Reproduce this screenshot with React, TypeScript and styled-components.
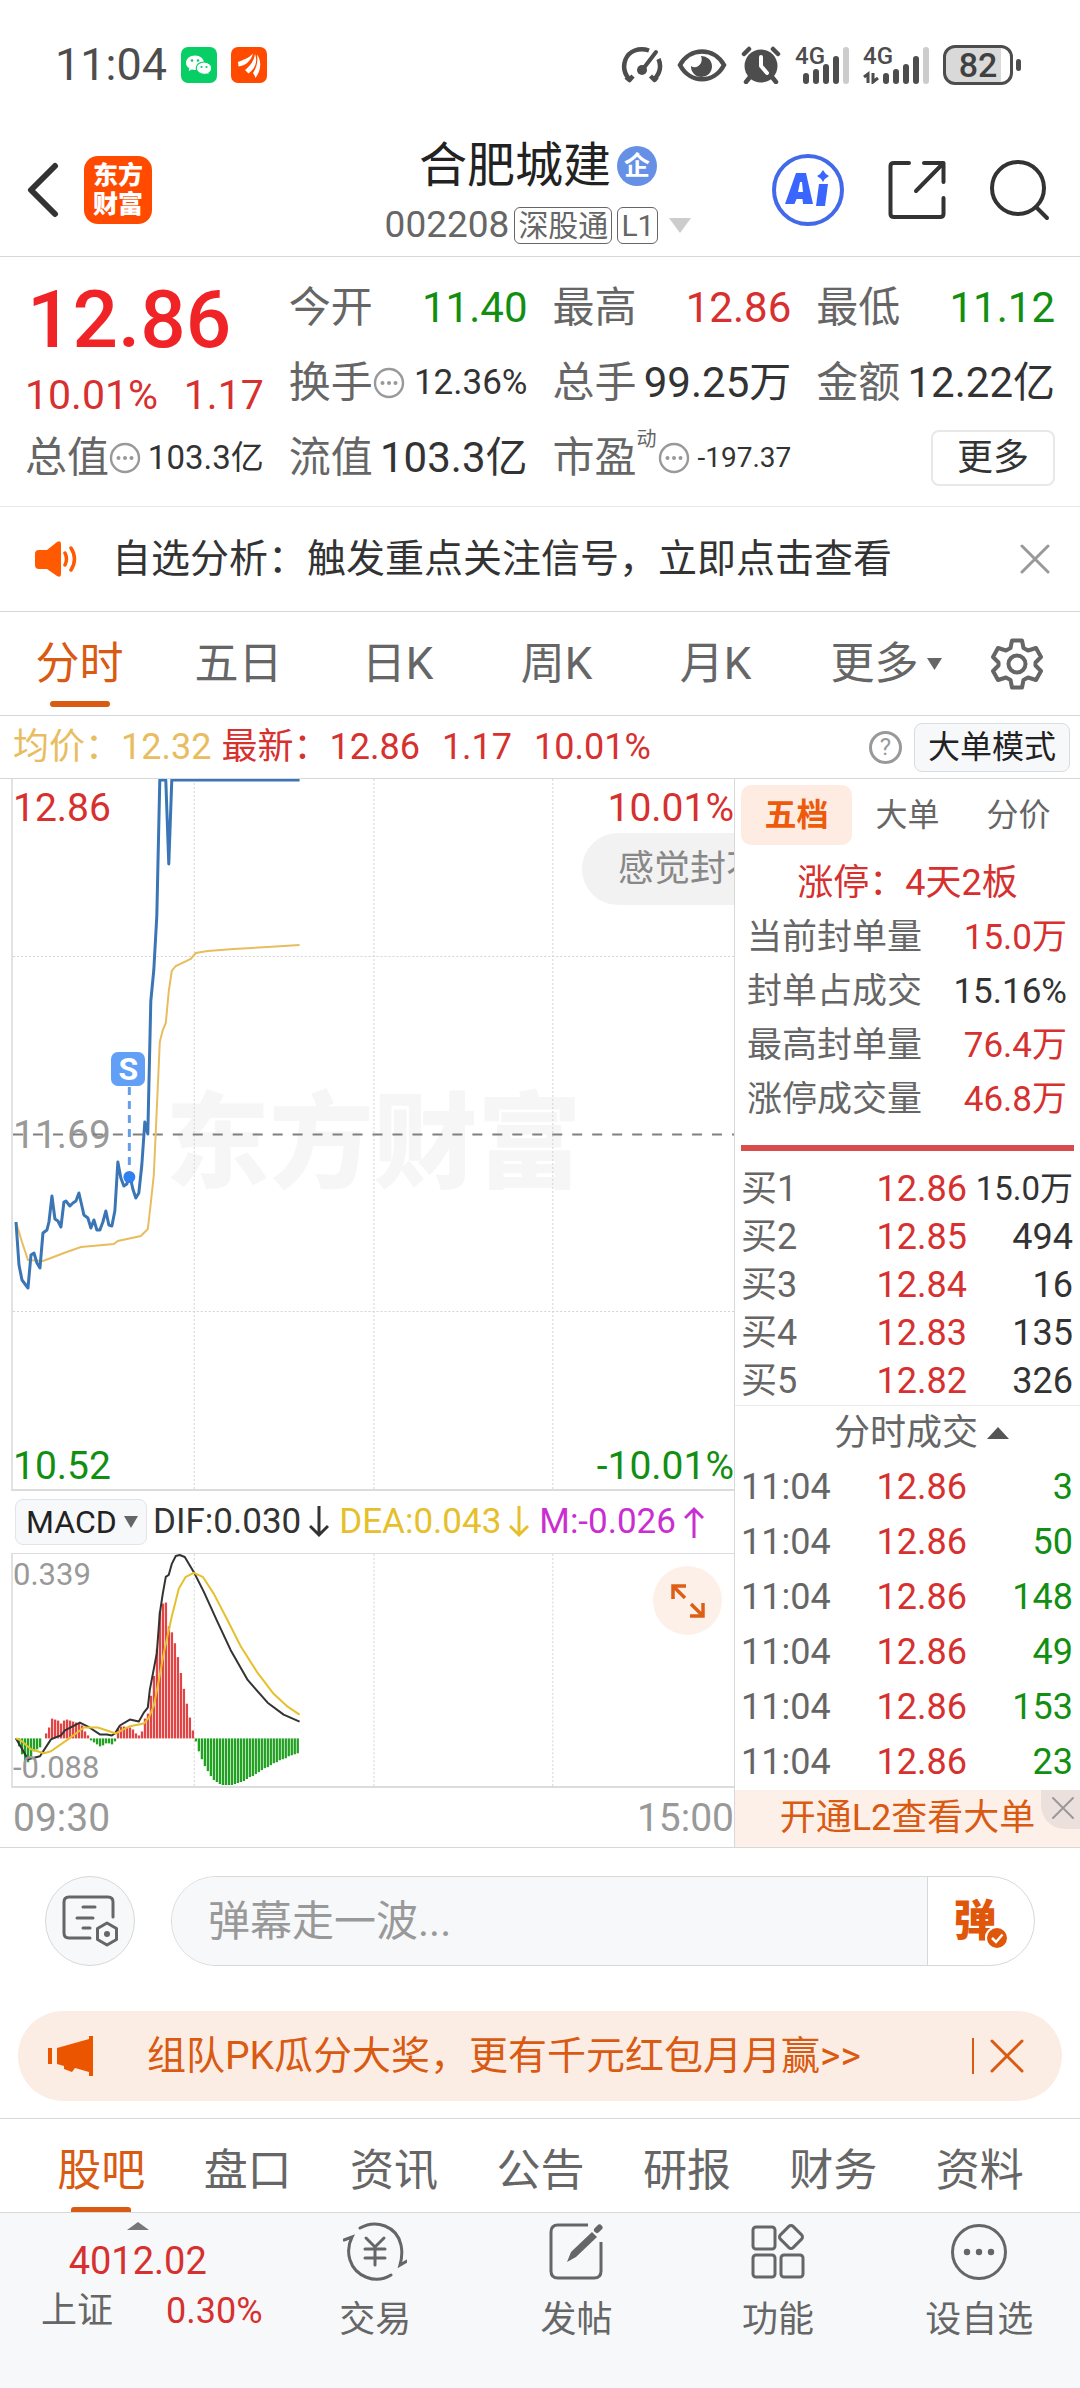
import React from "react";
import styled, { createGlobalStyle } from "styled-components";

const color = {
  red: "#d6302f",
  green: "#128f12",
  ink: "#333333",
  gray: "#666666",
  mute: "#999999",
  orange: "#d95a12",
  blue: "#3a75b5",
  gold: "#e8bd60",
  yellow: "#e6c02c",
  purple: "#c92fd0",
  line: "#d8d8d8",
  soft: "#f7f8fa",
  peach: "#fdf0e9",
};

const GlobalStyle = createGlobalStyle`
  *, *::before, *::after { box-sizing: border-box; }
  body { margin: 0; background: #fff; }
  body, button, input, select {
    font-family: Roboto, "Noto Sans CJK SC", sans-serif;
    color: ${color.ink};
  }
  button, select { border: 0; background: none; padding: 0; margin: 0; cursor: pointer; }
  svg { display: block; flex: none; }
  table { border-collapse: collapse; }
  h1, p, dl, dd, dt { margin: 0; font-weight: 400; }
`;

const Page = styled.div`
  display: flex;
  flex-direction: column;
  min-height: 100vh;
`;

/* ---------- status bar ---------- */

const StatusBar = styled.div`
  display: flex;
  justify-content: space-between;
  align-items: center;
  height: 130px;
  padding: 0 67px 0 55px;
`;
const StatusGroup = styled.div<{ $gap: number }>`
  display: flex;
  align-items: center;
  gap: ${(p) => p.$gap}px;
`;
const Clock = styled.span`
  font-size: 45px;
  line-height: 50px;
  color: #4d4d4d;
`;
const Signal = styled.span`
  position: relative;
  display: block;
`;
const SignalTag = styled.span`
  position: absolute;
  left: 0;
  top: -2px;
  font-size: 24px;
  line-height: 24px;
  font-weight: 500;
  color: #4d4d4d;
`;
const Battery = styled.span`
  position: relative;
  display: flex;
  align-items: center;
  justify-content: center;
  width: 70px;
  height: 40px;
  border: 3px solid #4d4d4d;
  border-radius: 12px;
  background: linear-gradient(90deg, #d9d9d9 86%, #fff 86%);
  font-size: 34px;
  line-height: 34px;
  font-weight: 500;
  color: #404040;
  &::after {
    content: "";
    position: absolute;
    right: -11px;
    top: 11px;
    width: 5px;
    height: 12px;
    border-radius: 3px;
    background: #4d4d4d;
  }
`;

/* ---------- header ---------- */

const Header = styled.header`
  display: grid;
  grid-template-columns: 1fr auto 1fr;
  align-items: center;
  height: 127px;
  padding: 0 30px 2px 26px;
  border-bottom: 1px solid ${color.line};
`;
const HeaderSide = styled.div<{ $end?: boolean }>`
  display: flex;
  align-items: center;
  gap: ${(p) => (p.$end ? 44 : 24)}px;
  justify-content: ${(p) => (p.$end ? "flex-end" : "flex-start")};
  padding-bottom: 4px;
`;
const Logo = styled.span`
  display: grid;
  place-items: center;
  width: 68px;
  height: 68px;
  border-radius: 14px;
  background: #ff4a00;
  color: #fff;
  font-size: 25px;
  line-height: 29px;
  font-weight: 900;
`;
const TitleBlock = styled.div`
  display: flex;
  flex-direction: column;
  align-items: center;
  padding-top: 6px;
`;
const TitleRow = styled.div`
  display: flex;
  align-items: center;
  gap: 6px;
  height: 60px;
`;
const StockName = styled.h1`
  font-size: 48px;
  line-height: 60px;
  color: #222;
`;
const CorpBadge = styled.span`
  width: 40px;
  height: 40px;
  border-radius: 50%;
  background: #6690e6;
  color: #fff;
  font-size: 26px;
  line-height: 40px;
  font-weight: 700;
  text-align: center;
`;
const CodeRow = styled.div`
  display: flex;
  align-items: center;
  gap: 5px;
  height: 58px;
  color: ${color.gray};
`;
const Code = styled.span`
  font-size: 37px;
  line-height: 44px;
`;
const CodeTag = styled.span`
  padding: 0 3px;
  border: 1px solid ${color.gray};
  border-radius: 6px;
  font-size: 30px;
  line-height: 35px;
`;
const CodeArrow = styled.span`
  padding-left: 6px;
`;

/* ---------- quote ---------- */

const Quote = styled.section`
  display: grid;
  grid-template-columns: repeat(4, minmax(0, 1fr));
  grid-template-rows: repeat(3, 75px);
  column-gap: 25px;
  padding: 13px 25px 11px;
  border-bottom: 1px solid #e8e8e8;
`;
const PriceBlock = styled.div`
  grid-row: span 2;
`;
const LastPrice = styled.div`
  padding-left: 2px;
  font-size: 80px;
  line-height: 100px;
  font-weight: 500;
  color: #f02426;
`;
const ChangeRow = styled.div`
  display: flex;
  justify-content: space-between;
  font-size: 41px;
  line-height: 50px;
  color: ${color.red};
`;
const Stat = styled.dl`
  display: flex;
  align-items: center;
  justify-content: space-between;
  white-space: nowrap;
`;
const StatLabel = styled.dt`
  display: flex;
  align-items: center;
  font-size: 42px;
  line-height: 50px;
  color: ${color.gray};
`;
const StatNote = styled.span`
  align-self: flex-start;
  margin: -4px 1px 0 0;
  font-size: 20px;
  line-height: 20px;
`;
const StatValue = styled.dd<{ $size?: number; $color?: string }>`
  font-size: ${(p) => p.$size ?? 42}px;
  line-height: 50px;
  color: ${(p) => p.$color ?? color.ink};
`;
const MoreButton = styled.button`
  justify-self: end;
  align-self: center;
  width: 124px;
  height: 56px;
  border: 2px solid #e8e8e8;
  border-radius: 8px;
  font-size: 36px;
  line-height: 50px;
`;

/* ---------- alert ---------- */

const AlertBar = styled.section`
  display: flex;
  align-items: center;
  height: 105px;
  padding: 0 30px 0 33px;
  border-bottom: 1px solid ${color.line};
`;
const AlertLink = styled.a`
  flex: 1;
  padding-left: 33px;
  font-size: 39px;
  line-height: 50px;
  color: ${color.ink};
  text-decoration: none;
  white-space: nowrap;
`;

/* ---------- period tabs ---------- */

const PeriodTabs = styled.nav`
  display: grid;
  grid-template-columns: repeat(5, 159fr) 182fr 79fr;
  height: 104px;
  padding-right: 24px;
  border-bottom: 1px solid ${color.line};
`;
const Tab = styled.button<{ $active?: boolean }>`
  position: relative;
  display: flex;
  align-items: center;
  justify-content: center;
  gap: 8px;
  font-size: 44px;
  line-height: 60px;
  color: ${(p) => (p.$active ? color.orange : color.gray)};
  &::after {
    content: "";
    display: ${(p) => (p.$active ? "block" : "none")};
    position: absolute;
    left: calc(50% - 30px);
    bottom: 8px;
    width: 60px;
    height: 6px;
    border-radius: 3px;
    background: ${color.orange};
  }
`;

/* ---------- price summary ---------- */

const SummaryBar = styled.section`
  display: flex;
  align-items: center;
  height: 63px;
  padding: 0 10px 0 13px;
  border-bottom: 1px solid ${color.line};
  font-size: 36px;
  line-height: 50px;
  white-space: nowrap;
`;
const SummaryItem = styled.span<{ $color: string; $gap: number }>`
  margin-right: ${(p) => p.$gap}px;
  color: ${(p) => p.$color};
`;
const SummaryTools = styled.div`
  display: flex;
  align-items: center;
  gap: 12px;
  margin-left: auto;
`;
const HelpButton = styled.button`
  width: 33px;
  height: 33px;
  border: 3px solid ${color.mute};
  border-radius: 50%;
  font-size: 24px;
  line-height: 26px;
  color: ${color.mute};
`;
const ModeButton = styled.button`
  height: 49px;
  padding: 0 13px;
  border: 1px solid #d9dce0;
  border-radius: 8px;
  background: ${color.soft};
  font-size: 32px;
  line-height: 46px;
  color: #222;
`;

/* ---------- main area ---------- */

const Main = styled.main`
  display: grid;
  grid-template-columns: minmax(0, 735fr) minmax(0, 345fr);
  border-bottom: 1px solid ${color.line};
`;
const ChartColumn = styled.section`
  padding-left: 11px;
  border-right: 1px solid ${color.line};
`;
const PlotBox = styled.div<{ $height: number }>`
  position: relative;
  height: ${(p) => p.$height}px;
  border-left: 2px solid #e2e2e2;
  border-bottom: 2px solid #dcdcdc;
  overflow: hidden;
`;
const MacdPlot = styled(PlotBox)`
  border-top: 1px solid #dcdcdc;
`;
const Plot = styled.svg`
  position: relative;
  width: 100%;
  height: 100%;
`;
const AxisLabel = styled.span<{
  $top: number;
  $right?: boolean;
  $size?: number;
  $color: string;
}>`
  position: absolute;
  top: ${(p) => p.$top}px;
  ${(p) => (p.$right ? "right: 0;" : "left: 0;")}
  font-size: ${(p) => p.$size ?? 39}px;
  line-height: 44px;
  color: ${(p) => p.$color};
`;
const Watermark = styled.span`
  position: absolute;
  inset: 0;
  display: flex;
  align-items: center;
  justify-content: center;
  font-size: 104px;
  font-weight: 900;
  color: #f6f6f6;
`;
const Bubble = styled.span`
  position: absolute;
  left: 569px;
  top: 54px;
  padding: 0 36px;
  border-radius: 36px;
  background: #f2f2f2;
  font-size: 36px;
  line-height: 72px;
  color: #888;
  white-space: nowrap;
`;
const Marker = styled.span`
  position: absolute;
  left: 16%;
  top: 273px;
  width: 34px;
  height: 34px;
  margin-left: -17px;
  border-radius: 7px;
  background: #629ff7;
  color: #fff;
  font-size: 32px;
  line-height: 34px;
  font-weight: 700;
  text-align: center;
`;
const MacdBar = styled.div`
  display: flex;
  align-items: center;
  height: 62px;
  padding-left: 4px;
  font-size: 35px;
  line-height: 46px;
  white-space: nowrap;
`;
const SelectWrap = styled.label`
  position: relative;
  display: block;
  margin-right: 6px;
  svg {
    position: absolute;
    right: 9px;
    top: 17px;
    pointer-events: none;
  }
`;
const IndicatorSelect = styled.select`
  appearance: none;
  display: block;
  width: 132px;
  height: 46px;
  padding-left: 10px;
  border: 1px solid #e1e4e8;
  border-radius: 8px;
  background: ${color.soft};
  font-size: 32px;
  line-height: 44px;
  color: #222;
`;
const Indicator = styled.span<{ $color: string }>`
  display: flex;
  align-items: center;
  gap: 8px;
  margin-right: 10px;
  color: ${(p) => p.$color};
`;
const ExpandButton = styled.button`
  position: absolute;
  right: 12px;
  top: 12px;
  display: grid;
  place-items: center;
  width: 69px;
  height: 69px;
  border-radius: 50%;
  background: ${color.peach};
`;
const TimeAxis = styled.div`
  display: flex;
  justify-content: space-between;
  height: 59px;
  padding-left: 2px;
  font-size: 39px;
  line-height: 60px;
  color: ${color.mute};
`;

/* ---------- side panel ---------- */

const SidePanel = styled.aside`
  padding-top: 6px;
`;
const SideTabs = styled.div`
  display: grid;
  grid-template-columns: repeat(3, 1fr);
  height: 60px;
  margin: 0 6px 11px;
`;
const SideTab = styled.button<{ $active?: boolean }>`
  border-radius: 10px;
  background: ${(p) => (p.$active ? "#feece3" : "transparent")};
  font-size: 32px;
  line-height: 60px;
  font-weight: ${(p) => (p.$active ? 700 : 400)};
  color: ${(p) => (p.$active ? "#ee5a0c" : color.gray)};
`;
const LimitTitle = styled.p`
  font-size: 36px;
  line-height: 55px;
  color: ${color.red};
  text-align: center;
`;
const LimitRow = styled.dl`
  display: flex;
  justify-content: space-between;
  padding: 0 13px 0 12px;
  font-size: 35px;
  line-height: 54px;
  white-space: nowrap;
`;
const LimitLabel = styled.dt`
  color: ${color.gray};
`;
const LimitValue = styled.dd<{ $color: string }>`
  color: ${(p) => p.$color};
`;
const RatioBar = styled.div`
  height: 6px;
  margin: 18px 6px 14px;
  background: #d94c4c;
`;
const DataTable = styled.table<{ $row: number }>`
  width: 100%;
  font-size: 36px;
  line-height: ${(p) => p.$row}px;
  tr {
    height: ${(p) => p.$row}px;
  }
`;
const BookTable = styled(DataTable)`
  border-bottom: 1px solid #ececec;
`;
const NameCell = styled.th`
  width: 102px;
  padding: 0 0 0 6px;
  font-weight: 400;
  text-align: left;
  color: ${color.gray};
`;
const PriceCell = styled.td`
  width: 130px;
  padding: 0;
  text-align: right;
  color: ${color.red};
`;
const VolumeCell = styled.td<{ $color: string; $size?: number }>`
  padding: 0 7px 0 0;
  text-align: right;
  font-size: ${(p) => p.$size ?? 36}px;
  color: ${(p) => p.$color};
  white-space: nowrap;
`;
const TradesHead = styled.button`
  display: flex;
  align-items: center;
  justify-content: center;
  gap: 9px;
  width: 100%;
  height: 54px;
  padding-left: 28px;
  font-size: 36px;
  line-height: 54px;
  color: ${color.gray};
`;
const LevelBanner = styled.div`
  position: relative;
  height: 57px;
  background: ${color.peach};
`;
const LevelLink = styled.a`
  display: block;
  font-size: 36px;
  line-height: 57px;
  color: ${color.orange};
  text-align: center;
  text-decoration: none;
`;
const CornerClose = styled.button`
  position: absolute;
  right: 0;
  top: 0;
  display: grid;
  place-items: center;
  width: 39px;
  height: 39px;
  padding: 0 0 4px 4px;
  border-radius: 0 0 0 24px;
  background: #ebe0db;
`;

/* ---------- comment + promo ---------- */

const CommentRow = styled.section`
  display: flex;
  gap: 36px;
  padding: 28px 45px 45px;
`;
const RoundButton = styled.button`
  display: grid;
  place-items: center;
  width: 90px;
  height: 90px;
  border: 1px solid ${color.line};
  border-radius: 50%;
  background: ${color.soft};
`;
const CommentBox = styled.div`
  display: flex;
  flex: 1;
  height: 90px;
  border: 1px solid ${color.line};
  border-radius: 45px;
  overflow: hidden;
`;
const CommentInput = styled.input`
  flex: 1;
  min-width: 0;
  padding: 0 36px;
  border: 0;
  background: ${color.soft};
  font-size: 42px;
  &::placeholder {
    color: ${color.mute};
    opacity: 1;
  }
`;
const BarrageButton = styled.button`
  position: relative;
  width: 107px;
  padding-right: 12px;
  border-left: 1px solid ${color.line};
  font-size: 43px;
  line-height: 84px;
  font-weight: 900;
  color: #e0570b;
  svg {
    position: absolute;
    left: 57px;
    top: 49px;
  }
`;
const Promo = styled.section`
  display: flex;
  align-items: center;
  height: 90px;
  margin: 0 18px 17px;
  padding: 0 38px 0 30px;
  border-radius: 45px;
  background: #fcede4;
`;
const PromoLink = styled.a`
  flex: 1;
  padding-left: 53px;
  font-size: 39px;
  line-height: 50px;
  color: ${color.orange};
  text-decoration: none;
  white-space: nowrap;
`;
const PromoClose = styled.button`
  display: flex;
  align-items: center;
  height: 36px;
  padding-left: 16px;
  border-left: 2px solid ${color.orange};
`;

/* ---------- bottom ---------- */

const SectionTabs = styled.nav`
  display: grid;
  grid-template-columns: repeat(7, 1fr);
  height: 95px;
  padding: 0 27px 0 28px;
  border-top: 1px solid ${color.line};
  border-bottom: 1px solid ${color.line};
  ${Tab} {
    padding-top: 10px;
  }
  ${Tab}::after {
    bottom: 0;
    height: 5px;
    border-radius: 3px 3px 0 0;
  }
`;
const BottomBar = styled.footer`
  display: grid;
  grid-template-columns: 274fr repeat(4, 201fr);
  align-items: start;
  flex: 1;
  min-height: 175px;
  background: ${color.soft};
`;
const IndexBlock = styled.a`
  display: grid;
  grid-template-columns: 1fr 1fr;
  justify-items: center;
  padding: 9px 12px 0 41px;
  font-size: 36px;
  line-height: 50px;
  color: ${color.gray};
  text-decoration: none;
  > svg {
    grid-column: span 2;
    justify-self: center;
    margin-right: 28px;
  }
`;
const IndexValue = styled.span`
  grid-column: span 2;
  margin-right: 28px;
  font-size: 38px;
  line-height: 62px;
  color: ${color.red};
`;
const IndexName = styled.span`
  justify-self: start;
  line-height: 38px;
`;
const IndexChange = styled.span`
  justify-self: end;
  line-height: 38px;
  color: ${color.red};
`;
const NavButton = styled.button`
  display: flex;
  flex-direction: column;
  align-items: center;
  gap: 12px;
  padding-top: 8px;
  font-size: 36px;
  line-height: 50px;
  color: ${color.gray};
`;
const IconButton = styled.button`
  display: grid;
  place-items: center;
`;

/* ---------- icons ---------- */

const Triangle = ({ w, h, up, fill }: { w: number; h: number; up?: boolean; fill: string }) => (
  <svg width={w} height={h} viewBox="0 0 10 10" preserveAspectRatio="none" aria-hidden>
    <path d={up ? "M0 10L5 0L10 10Z" : "M0 0H10L5 10Z"} fill={fill} />
  </svg>
);

const Cross = ({ size, stroke, width = 3 }: { size: number; stroke: string; width?: number }) => (
  <svg width={size} height={size} viewBox={`0 0 ${size} ${size}`} aria-hidden>
    <path
      d={`M2 2L${size - 2} ${size - 2}M${size - 2} 2L2 ${size - 2}`}
      stroke={stroke}
      strokeWidth={width}
      strokeLinecap="round"
    />
  </svg>
);

const Arrow = ({ up }: { up?: boolean }) => (
  <svg width="20" height="32" viewBox="0 0 20 32" fill="none" stroke="currentColor" strokeWidth="3" aria-hidden>
    <path d={up ? "M10 32V3M1 12L10 3L19 12" : "M10 0V29M1 20L10 29L19 20"} />
  </svg>
);

const InfoDots = () => (
  <svg width="32" height="32" viewBox="0 0 32 32" aria-hidden>
    <circle cx="16" cy="16" r="14" fill="none" stroke="#999" strokeWidth="2.4" />
    <circle cx="9.500" cy="16" r="2" fill="#999" />
    <circle cx="16" cy="16" r="2" fill="#999" />
    <circle cx="22.500" cy="16" r="2" fill="#999" />
  </svg>
);

const WechatIcon = () => (
  <svg width="36" height="36" viewBox="0 0 36 36" aria-hidden>
    <rect width="36" height="36" rx="7" fill="#07cf65" />
    <path d="M14 8.500c-5 0-9 3.200-9 7.200 0 2.300 1.300 4.300 3.300 5.600l-.6 2.600 3-1.500c1 .3 2.100.5 3.300.5 5 0 9-3.200 9-7.200s-4-7.200-9-7.200z" fill="#fff" />
    <path d="M23 15c4.300 0 7.800 2.800 7.800 6.200 0 2-1.100 3.700-2.900 4.800l.5 2.300-2.600-1.300c-.9.300-1.800.4-2.800.4-4.300 0-7.800-2.800-7.800-6.200S18.700 15 23 15z" fill="#fff" stroke="#07cf65" strokeWidth="1.200" />
    <g fill="#07cf65">
      <circle cx="11" cy="13.500" r="1.300" />
      <circle cx="17" cy="13.500" r="1.300" />
      <circle cx="20.500" cy="20" r="1.100" />
      <circle cx="25.500" cy="20" r="1.100" />
    </g>
  </svg>
);

const EastIcon = () => (
  <svg width="36" height="36" viewBox="0 0 36 36" aria-hidden>
    <rect width="36" height="36" rx="7" fill="#ff4a00" />
    <g fill="#fff">
      <path d="M7 15C12 13 18 11 22 6.500C20 14 14 19 7.500 19.500Z" />
      <path d="M14 23C19 19 23 14 24 7C27 15 24 22 17.500 26.500Z" />
      <path d="M22 26C26 20 27 14 26 7.500C31 14 30 24 24.500 31C24 29 23 27.500 22 26Z" />
    </g>
  </svg>
);

const GaugeIcon = () => (
  <svg width="42" height="38" viewBox="0 0 42 38" fill="none" stroke="#4d4d4d" strokeWidth="4.500" aria-hidden>
    <path d="M28 4.500C18 1 8 5 4.500 13.500C2 20 3 27 8 33M5 31L8.500 34L12 30" strokeLinejoin="round" />
    <path d="M37.500 13C40.500 20 39 27 33.500 33M29.500 30L33.500 34L36 31" strokeLinejoin="round" />
    <circle cx="21" cy="24" r="5" fill="#4d4d4d" stroke="none" />
    <path d="M22 23L35 6" strokeWidth="4" strokeLinecap="round" />
  </svg>
);

const EyeIcon = () => (
  <svg width="50" height="34" viewBox="0 0 50 34" aria-hidden>
    <path d="M3 17C13 -1 37 -1 47 17C37 36 13 36 3 17Z" fill="none" stroke="#4d4d4d" strokeWidth="4.500" />
    <path d="M24 8A10.500 10.500 0 1 1 14 18C20 22 27 15 24 8Z" fill="#4d4d4d" />
  </svg>
);

const AlarmIcon = () => (
  <svg width="40" height="38" viewBox="0 0 40 38" aria-hidden>
    <circle cx="20" cy="20" r="16.500" fill="#4d4d4d" />
    <path d="M3 8L8 3M37 8L32 3" stroke="#4d4d4d" strokeWidth="4.500" strokeLinecap="round" />
    <path d="M9 31L5 36M31 31L35 36" stroke="#4d4d4d" strokeWidth="4.500" strokeLinecap="round" />
    <path d="M20 11V20L26 27" stroke="#fff" strokeWidth="4" fill="none" strokeLinecap="round" strokeLinejoin="round" />
  </svg>
);

const SignalIcon = ({ data }: { data?: boolean }) => {
  const x0 = data ? 20 : 8;
  return (
    <Signal>
      <SignalTag>4G</SignalTag>
      <svg width={data ? 66 : 54} height="38" viewBox={`0 0 ${data ? 66 : 54} 38`} aria-hidden>
        {[11, 15, 20, 28, 37].map((h, i) => (
          <rect key={h} x={x0 + i * 10} y={38 - h} width="6" height={h} rx="3" fill={i === 4 ? "#cccccc" : "#4d4d4d"} />
        ))}
        {data && <path d="M1 31L5 28V37M10 27V36L15 32" fill="none" stroke="#4d4d4d" strokeWidth="3" />}
      </svg>
    </Signal>
  );
};

const BackIcon = () => (
  <svg width="34" height="56" viewBox="0 0 34 56" fill="none" stroke="#333" strokeWidth="6" aria-hidden>
    <path d="M29 4L5 28L29 52" strokeLinecap="round" strokeLinejoin="round" />
  </svg>
);

const AiIcon = () => (
  <svg width="72" height="74" viewBox="0 0 72 74" aria-hidden>
    <circle cx="36" cy="37" r="34" fill="none" stroke="#4169e8" strokeWidth="4" />
    <path d="M24 20H34L41 51H31L30.500 46H24.500L22.500 51H13ZM28 29L26 39H31L30 29Z" fill="#3a66ff" fillRule="evenodd" />
    <path d="M47 31H56L53 53H44Z" fill="#3a66ff" />
    <path d="M51 17Q53 21 57 23Q53 25 51 29Q49 25 45 23Q49 21 51 17Z" fill="#3a66ff" />
  </svg>
);

const ShareIcon = () => (
  <svg width="58" height="60" viewBox="0 0 58 60" fill="none" stroke="#333" strokeWidth="4" strokeLinecap="round" strokeLinejoin="round" aria-hidden>
    <path d="M21 3H6Q2.500 3 2.500 6V54Q2.500 57 6 57H52Q55.500 57 55.500 54V38" />
    <path d="M36 3H55.500V22M55 3.500L28 31" />
  </svg>
);

const SearchIcon = () => (
  <svg width="60" height="62" viewBox="0 0 60 62" fill="none" stroke="#333" strokeWidth="4" strokeLinecap="round" aria-hidden>
    <circle cx="28" cy="29" r="26" />
    <path d="M46 48L57 59" />
  </svg>
);

const SpeakerIcon = () => (
  <svg width="46" height="38" viewBox="0 0 46 38" aria-hidden>
    <path d="M6 10H14L24 2Q28 0 28 4V34Q28 38 24 36L14 29H6Q2 29 2 25V14Q2 10 6 10Z" fill="#ff5a00" />
    <path d="M32 13Q35 19 32 25M38 8Q45 19 38 30" fill="none" stroke="#ff5a00" strokeWidth="3.500" strokeLinecap="round" />
  </svg>
);

const GearIcon = () => (
  <svg width="54" height="54" viewBox="0 0 54 54" fill="none" stroke="#666" strokeWidth="4" strokeLinejoin="round" aria-hidden>
    <path d="M22 3.500H32L33.500 11L38 13.500L46 11L51 20L45.500 25.500V28.500L51 34L46 43L38 40.500L33.500 43L32 50.500H22L20.500 43L16 40.500L8 43L3 34L8.500 28.500V25.500L3 20L8 11L16 13.500L20.500 11Z" />
    <circle cx="27" cy="27" r="8.500" />
  </svg>
);

const ExpandIcon = () => (
  <svg width="36" height="36" viewBox="0 0 36 36" fill="none" stroke="#dd5f16" strokeWidth="3.500" aria-hidden>
    <path d="M16 3H3V16M4 4L15 15" />
    <path d="M33 20V33H20M32 32L21 21" />
  </svg>
);

const NoteIcon = () => (
  <svg width="56" height="52" viewBox="0 0 56 52" fill="none" stroke="#666" strokeWidth="3" strokeLinecap="round" aria-hidden>
    <path d="M28 43H7Q2 43 2 38V7Q2 2 7 2H46Q51 2 51 7V22" />
    <path d="M21 12H33M15 23H31M21 33H28" />
    <path d="M45 28L54.500 33.500V44.500L45 50L35.500 44.500V33.500Z" strokeLinejoin="round" />
    <circle cx="45" cy="39" r="3" fill="#666" stroke="none" />
  </svg>
);

const CheckIcon = () => (
  <svg width="24" height="24" viewBox="0 0 24 24" aria-hidden>
    <circle cx="12" cy="12" r="11" fill="#e0570b" stroke="#fff" strokeWidth="2" />
    <path d="M7 12L11 16L17.500 8.500" fill="none" stroke="#fff" strokeWidth="2.500" />
  </svg>
);

const HornIcon = () => (
  <svg width="46" height="40" viewBox="0 0 46 40" aria-hidden>
    <path d="M0 12H4V28H0ZM9 12L41 3V0H45V40H41V36L27 32L24 36L16 33V30L9 28Z" fill="#ec5500" />
  </svg>
);

const TradeIcon = () => (
  <svg width="64" height="62" viewBox="0 0 64 62" fill="none" stroke="#666" strokeWidth="3" strokeLinecap="round" aria-hidden>
    <path d="M17 7C33 -2 54 5 58 24C59.500 31 59 37 57 44L64 40" />
    <path d="M48 54C32 64 12 55 7 39C4.500 31 5 24 9 16L1 19" />
    <path d="M23 17L32 26L41 17M32 26V44M22 28H42M22 37H42" />
  </svg>
);

const PostIcon = () => (
  <svg width="58" height="62" viewBox="0 0 58 62" aria-hidden>
    <path d="M40 4H10Q3 4 3 11V50Q3 57 10 57H46Q53 57 53 50V21" fill="none" stroke="#666" strokeWidth="3" />
    <path d="M19 41L23 31L44 11L49 16L28 36Z" fill="#666" />
    <path d="M49 9L51.500 6.500" stroke="#666" strokeWidth="6" strokeLinecap="round" />
  </svg>
);

const GridIcon = () => (
  <svg width="56" height="62" viewBox="0 0 56 62" fill="none" stroke="#666" strokeWidth="3" strokeLinejoin="round" aria-hidden>
    <rect x="3" y="6" width="22" height="22" rx="3" />
    <rect x="3" y="34" width="22" height="22" rx="3" />
    <rect x="31" y="34" width="22" height="22" rx="3" />
    <rect x="32" y="7" width="18" height="18" rx="3" transform="rotate(45 41 16)" />
  </svg>
);

const DotsIcon = () => (
  <svg width="58" height="62" viewBox="0 0 58 62" fill="#666" aria-hidden>
    <circle cx="29" cy="31" r="26.500" fill="none" stroke="#666" strokeWidth="3" />
    <circle cx="17" cy="31" r="3.200" />
    <circle cx="29" cy="31" r="3.200" />
    <circle cx="41" cy="31" r="3.200" />
  </svg>
);

/* ---------- data ---------- */

const priceLine =
  "3,443 6,486 9,501 15,509 18,476 21,474 24,484 27,489 30,454 34,451 36,443 39,417 42,440 45,442 48,448 51,423 53,422 57,427 60,424 63,422 66,414 69,427 71,436 75,439 78,449 81,441 84,451 87,451 90,443 93,432 96,446 99,447 102,432 105,383 108,399 111,407 114,405 117,396 120,410 123,419 126,414 129,386 132,343 135,355 138,222 141,191 144,137 147,1 153,1 156,85 159,1 287,1";
const averageLine =
  "3,443 9,463 15,481 30,482 38,479 51,474 68,468 101,465 105,462 128,457 135,450 138,424 141,396 144,330 147,263 150,251 153,244 156,212 159,192 163,187 178,180 183,174 195,172 221,170 255,168 287,166";

const difLine =
  "3,186 15,207 27,204 38,187 45,184 48,183 52,178 67,170 75,174 87,182 94,182 99,183 102,181 107,173 117,167 126,169 131,160 135,155 137,137 144,100 147,60 150,40 153,23 156,21 159,10 163,2 167,1 172,3 182,20 191,38 205,69 218,97 235,127 255,150 271,162 287,169";
const deaLine =
  "3,186 8,188 18,197 31,201 38,199 55,187 71,175 85,175 103,181 116,174 131,171 136,165 141,153 145,133 151,100 159,63 166,35 173,23 181,19 190,23 201,40 215,67 228,93 245,120 261,141 275,154 287,162";

const macdBars = [
  -1, -8, -16, -22, -24, -18, -13, -11, -9, 0, 5, 11, 20, 19, 18, 15, 18, 19, 18, 17, 16, 15, 13, 7, 3, -2, -4, -6, -8,
  -7, -5, -5, -6, -3, 10, 12, 12, 11, 11, 9, 5, 3, 7, 20, 25, 43, 63, 90, 128, 136, 137, 113, 107, 96, 82, 66, 50, 35,
  21, 8, -3, -13, -21, -28, -33, -38, -42, -44, -46, -47, -47, -47, -47, -46, -45, -44, -43, -41, -39, -38, -36, -34,
  -32, -30, -29, -27, -25, -24, -22, -21, -20, -18, -17, -16, -15,
];

type StatItem = { label: string; value: string; color?: string; size?: number; dots?: boolean; note?: string };
const stats: StatItem[] = [
  { label: "今开", value: "11.40", color: color.green },
  { label: "最高", value: "12.86", color: color.red },
  { label: "最低", value: "11.12", color: color.green },
  { label: "换手", value: "12.36%", size: 35, dots: true },
  { label: "总手", value: "99.25万" },
  { label: "金额", value: "12.22亿" },
  { label: "总值", value: "103.3亿", size: 33, dots: true },
  { label: "流值", value: "103.3亿" },
  { label: "市盈", value: "-197.37", size: 28, dots: true, note: "动" },
];

const limitRows = [
  { label: "当前封单量", value: "15.0万", color: color.red },
  { label: "封单占成交", value: "15.16%", color: color.ink },
  { label: "最高封单量", value: "76.4万", color: color.red },
  { label: "涨停成交量", value: "46.8万", color: color.red },
];

const bids = [
  ["买1", "12.86", "15.0万"],
  ["买2", "12.85", "494"],
  ["买3", "12.84", "16"],
  ["买4", "12.83", "135"],
  ["买5", "12.82", "326"],
];

const trades = ["3", "50", "148", "49", "153", "23"];
const sections = ["股吧", "盘口", "资讯", "公告", "研报", "财务", "资料"];

const Grid = ({ height, rows }: { height: number; rows: number[] }) => (
  <g stroke="#d4d4d4" strokeWidth="1" strokeDasharray="2 2">
    {[181, 361, 540].map((x) => (
      <path key={x} d={`M${x + 0.5} 0V${height}`} />
    ))}
    {rows.map((y) => (
      <path key={y} d={`M0 ${y + 0.5}H722`} />
    ))}
  </g>
);

export default function App() {
  return (
    <Page>
      <GlobalStyle />
      <StatusBar>
        <StatusGroup $gap={14}>
          <Clock>11:04</Clock>
          <WechatIcon />
          <EastIcon />
        </StatusGroup>
        <StatusGroup $gap={14}>
          <GaugeIcon />
          <EyeIcon />
          <AlarmIcon />
          <SignalIcon />
          <SignalIcon data />
          <Battery>82</Battery>
        </StatusGroup>
      </StatusBar>

      <Header>
        <HeaderSide>
          <IconButton aria-label="返回">
            <BackIcon />
          </IconButton>
          <Logo>
            <span>
              东方
              <br />
              财富
            </span>
          </Logo>
        </HeaderSide>
        <TitleBlock>
          <TitleRow>
            <StockName>合肥城建</StockName>
            <CorpBadge>企</CorpBadge>
          </TitleRow>
          <CodeRow>
            <Code>002208</Code>
            <CodeTag>深股通</CodeTag>
            <CodeTag>L1</CodeTag>
            <CodeArrow>
              <Triangle w={22} h={15} fill="#cccccc" />
            </CodeArrow>
          </CodeRow>
        </TitleBlock>
        <HeaderSide $end>
          <IconButton aria-label="AI">
            <AiIcon />
          </IconButton>
          <IconButton aria-label="分享">
            <ShareIcon />
          </IconButton>
          <IconButton aria-label="搜索">
            <SearchIcon />
          </IconButton>
        </HeaderSide>
      </Header>

      <Quote>
        <PriceBlock>
          <LastPrice>12.86</LastPrice>
          <ChangeRow>
            <span>10.01%</span>
            <span>1.17</span>
          </ChangeRow>
        </PriceBlock>
        {stats.map((s) => (
          <Stat key={s.label}>
            <StatLabel>
              {s.label}
              {s.note && <StatNote>{s.note}</StatNote>}
              {s.dots && <InfoDots />}
            </StatLabel>
            <StatValue $color={s.color} $size={s.size}>
              {s.value}
            </StatValue>
          </Stat>
        ))}
        <MoreButton>更多</MoreButton>
      </Quote>

      <AlertBar>
        <SpeakerIcon />
        <AlertLink href="#signal">自选分析：触发重点关注信号，立即点击查看</AlertLink>
        <IconButton aria-label="关闭提示">
          <Cross size={30} stroke="#999" />
        </IconButton>
      </AlertBar>

      <PeriodTabs>
        <Tab $active>分时</Tab>
        <Tab>五日</Tab>
        <Tab>日K</Tab>
        <Tab>周K</Tab>
        <Tab>月K</Tab>
        <Tab>
          更多
          <Triangle w={15} h={12} fill="#666" />
        </Tab>
        <IconButton aria-label="设置">
          <GearIcon />
        </IconButton>
      </PeriodTabs>

      <SummaryBar>
        <SummaryItem $color={color.gold} $gap={10}>均价：12.32</SummaryItem>
        <SummaryItem $color={color.red} $gap={22}>最新：12.86</SummaryItem>
        <SummaryItem $color={color.red} $gap={22}>1.17</SummaryItem>
        <SummaryItem $color={color.red} $gap={0}>10.01%</SummaryItem>
        <SummaryTools>
          <HelpButton aria-label="帮助">?</HelpButton>
          <ModeButton>大单模式</ModeButton>
        </SummaryTools>
      </SummaryBar>

      <Main>
        <ChartColumn>
          <PlotBox $height={712}>
            <Watermark>东方财富</Watermark>
            <AxisLabel $top={334} $color={color.mute}>11.69</AxisLabel>
            <Plot viewBox="0 0 722 710" preserveAspectRatio="none">
              <Grid height={710} rows={[177, 532]} />
              <path d="M0 355.500H722" stroke="#808080" strokeWidth="2" strokeDasharray="10 10" />
              <polyline points={averageLine} fill="none" stroke={color.gold} strokeWidth="2" />
              <polyline points={priceLine} fill="none" stroke={color.blue} strokeWidth="3" strokeLinejoin="round" />
              <path d="M116.500 308V392" stroke="#629fe8" strokeWidth="3" strokeDasharray="8 6" />
              <circle cx="116.500" cy="398" r="6" fill="#2f80f0" />
            </Plot>
            <Marker>S</Marker>
            <AxisLabel $top={7} $color={color.red}>12.86</AxisLabel>
            <AxisLabel $top={7} $right $color={color.red}>10.01%</AxisLabel>
            <AxisLabel $top={665} $color={color.green}>10.52</AxisLabel>
            <AxisLabel $top={665} $right $color={color.green}>-10.01%</AxisLabel>
            <Bubble>感觉封不</Bubble>
          </PlotBox>

          <MacdBar>
            <SelectWrap>
              <IndicatorSelect aria-label="指标" defaultValue="MACD">
                <option>MACD</option>
              </IndicatorSelect>
              <Triangle w={14} h={12} fill="#666" />
            </SelectWrap>
            <Indicator $color={color.ink}>
              DIF:0.030
              <Arrow />
            </Indicator>
            <Indicator $color={color.yellow}>
              DEA:0.043
              <Arrow />
            </Indicator>
            <Indicator $color={color.purple}>
              M:-0.026
              <Arrow up />
            </Indicator>
          </MacdBar>

          <MacdPlot $height={235}>
            <Plot viewBox="0 0 722 234" preserveAspectRatio="none">
              <Grid height={234} rows={[]} />
              {macdBars.map((v, i) => (
                <rect
                  key={i}
                  x={2 + i * 3}
                  y={v > 0 ? 186 - v : 186}
                  width="2.300"
                  height={Math.abs(v)}
                  fill={v > 0 ? "#e04444" : "#22a022"}
                />
              ))}
              <polyline points={difLine} fill="none" stroke="#333" strokeWidth="2" strokeLinejoin="round" />
              <polyline points={deaLine} fill="none" stroke={color.yellow} strokeWidth="2" strokeLinejoin="round" />
            </Plot>
            <AxisLabel $top={-1} $size={31} $color={color.mute}>0.339</AxisLabel>
            <AxisLabel $top={192} $size={31} $color={color.mute}>-0.088</AxisLabel>
            <ExpandButton aria-label="全屏">
              <ExpandIcon />
            </ExpandButton>
          </MacdPlot>

          <TimeAxis>
            <span>09:30</span>
            <span>15:00</span>
          </TimeAxis>
        </ChartColumn>

        <SidePanel>
          <SideTabs>
            <SideTab $active>五档</SideTab>
            <SideTab>大单</SideTab>
            <SideTab>分价</SideTab>
          </SideTabs>
          <LimitTitle>涨停：4天2板</LimitTitle>
          {limitRows.map((r) => (
            <LimitRow key={r.label}>
              <LimitLabel>{r.label}</LimitLabel>
              <LimitValue $color={r.color}>{r.value}</LimitValue>
            </LimitRow>
          ))}
          <RatioBar />
          <BookTable $row={48}>
            <tbody>
              {bids.map(([name, price, volume], i) => (
                <tr key={name}>
                  <NameCell scope="row">{name}</NameCell>
                  <PriceCell>{price}</PriceCell>
                  <VolumeCell $color={color.ink} $size={i === 0 ? 33 : 36}>
                    {volume}
                  </VolumeCell>
                </tr>
              ))}
            </tbody>
          </BookTable>
          <TradesHead>
            分时成交
            <Triangle w={22} h={12} up fill="#555" />
          </TradesHead>
          <DataTable $row={55}>
            <tbody>
              {trades.map((volume) => (
                <tr key={volume}>
                  <NameCell scope="row">11:04</NameCell>
                  <PriceCell>12.86</PriceCell>
                  <VolumeCell $color={color.green}>{volume}</VolumeCell>
                </tr>
              ))}
            </tbody>
          </DataTable>
          <LevelBanner>
            <LevelLink href="#level2">开通L2查看大单</LevelLink>
            <CornerClose aria-label="关闭">
              <Cross size={24} stroke="#999" width={2} />
            </CornerClose>
          </LevelBanner>
        </SidePanel>
      </Main>

      <CommentRow>
        <RoundButton aria-label="弹幕设置">
          <NoteIcon />
        </RoundButton>
        <CommentBox>
          <CommentInput aria-label="弹幕" placeholder="弹幕走一波..." />
          <BarrageButton>
            弹
            <CheckIcon />
          </BarrageButton>
        </CommentBox>
      </CommentRow>

      <Promo>
        <HornIcon />
        <PromoLink href="#promo">组队PK瓜分大奖，更有千元红包月月赢&gt;&gt;</PromoLink>
        <PromoClose aria-label="关闭活动">
          <Cross size={34} stroke={color.orange} />
        </PromoClose>
      </Promo>

      <SectionTabs>
        {sections.map((s, i) => (
          <Tab key={s} $active={i === 0}>
            {s}
          </Tab>
        ))}
      </SectionTabs>

      <BottomBar>
        <IndexBlock href="#index">
          <Triangle w={22} h={8} up fill="#777" />
          <IndexValue>4012.02</IndexValue>
          <IndexName>上证</IndexName>
          <IndexChange>0.30%</IndexChange>
        </IndexBlock>
        <NavButton>
          <TradeIcon />
          交易
        </NavButton>
        <NavButton>
          <PostIcon />
          发帖
        </NavButton>
        <NavButton>
          <GridIcon />
          功能
        </NavButton>
        <NavButton>
          <DotsIcon />
          设自选
        </NavButton>
      </BottomBar>
    </Page>
  );
}
